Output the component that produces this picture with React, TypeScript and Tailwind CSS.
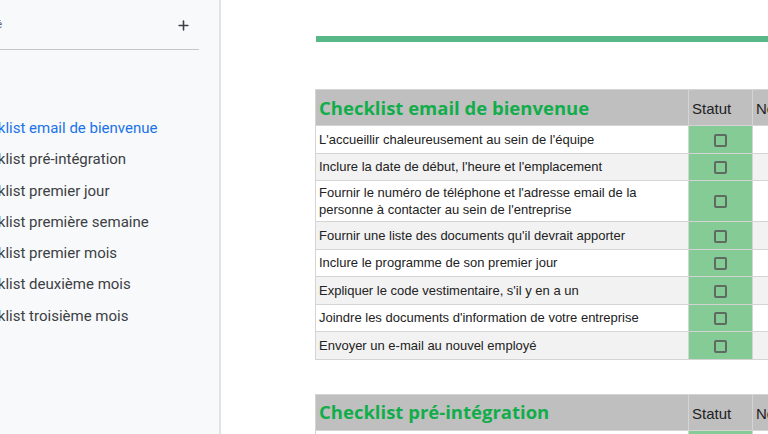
import { Plus } from 'lucide-react';

const navItems = [
  'Checklist email de bienvenue',
  'Checklist pré-intégration',
  'Checklist premier jour',
  'Checklist première semaine',
  'Checklist premier mois',
  'Checklist deuxième mois',
  'Checklist troisième mois',
];

const welcomeRows = [
  "L'accueillir chaleureusement au sein de l'équipe",
  "Inclure la date de début, l'heure et l'emplacement",
  "Fournir le numéro de téléphone et l'adresse email de la personne à contacter au sein de l'entreprise",
  "Fournir une liste des documents qu'il devrait apporter",
  'Inclure le programme de son premier jour',
  "Expliquer le code vestimentaire, s'il y en a un",
  "Joindre les documents d'information de votre entreprise",
  'Envoyer un e-mail au nouvel employé',
];

const Checkbox = () => (
  <span className="inline-block w-[13px] h-[13px] rounded-[2px] border-2 border-[#5d6b61] align-middle" />
);

const Checklist = ({ title, rows }: { title: string; rows: string[] }) => (
  <table className="border-collapse w-[560px] table-fixed font-['Liberation_Sans',Arial,sans-serif]">
    <colgroup>
      <col className="w-[373px]" />
      <col className="w-[64px]" />
      <col />
    </colgroup>
    <thead>
      <tr className="h-[36px] bg-[#bfbfbf]">
        <th className="border border-[#d4d4d4] px-[3px] text-left align-middle font-['Open_Sans',sans-serif] text-[18.5px] font-bold text-[#12ad4b]">
          {title}
        </th>
        <th className="border border-[#d4d4d4] px-[3px] pt-[4px] text-left align-middle text-[15px] font-normal text-[#222]">
          Statut
        </th>
        <th className="border border-[#d4d4d4] px-[3px] pt-[4px] text-left align-middle text-[15px] font-normal text-[#222]">
          Notes
        </th>
      </tr>
    </thead>
    <tbody>
      {rows.map((r, i) => (
        <tr key={i} className={`h-[27.5px] ${i % 2 === 0 ? 'bg-white' : 'bg-[#f2f2f2]'}`}>
          <td className="border border-[#d4d4d4] pl-[3px] pr-[40px] py-[3px] text-[13px] leading-[17px] text-[#222]">{r}</td>
          <td className="border border-[#d4d4d4] bg-[#84cb95] text-center align-middle leading-none">
            <Checkbox />
          </td>
          <td className="border border-[#d4d4d4]" />
        </tr>
      ))}
    </tbody>
  </table>
);

export default function App() {
  return (
    <div className="flex h-[434px] w-[768px] overflow-hidden bg-white font-['Roboto',sans-serif]">
      <aside className="w-[221px] shrink-0 overflow-hidden border-r-2 border-[#e2e3e5] bg-[#f8f9fb]">
        <div className="mr-[20px] flex h-[50px] items-center justify-between border-b border-[#c7c7c7] pt-[2px]">
          <span className="-ml-[76px] whitespace-nowrap text-[11px] text-[#5f6368]">Nouvel employé</span>
          <Plus className="mr-[8px] h-[15px] w-[15px] text-[#3c4043]" strokeWidth={2.5} />
        </div>
        <nav className="mt-[67px] flex flex-col">
          {navItems.map((n, i) => (
            <div
              key={n}
              className={`-ml-[36px] h-[31.3px] whitespace-nowrap text-[15px] ${i === 0 ? 'text-[#1a73e8]' : 'text-[#3c4043]'}`}
            >
              {n}
            </div>
          ))}
        </nav>
      </aside>
      <main className="flex-1 overflow-hidden pl-[94px]">
        <div className="mt-[36px] ml-[1px] h-[6px] w-[600px] bg-[#58b887]" />
        <div className="mt-[47px]">
          <Checklist title="Checklist email de bienvenue" rows={welcomeRows} />
        </div>
        <div className="mt-[34px]">
          <Checklist title="Checklist pré-intégration" rows={['Envoyer le contrat de travail']} />
        </div>
      </main>
    </div>
  );
}
